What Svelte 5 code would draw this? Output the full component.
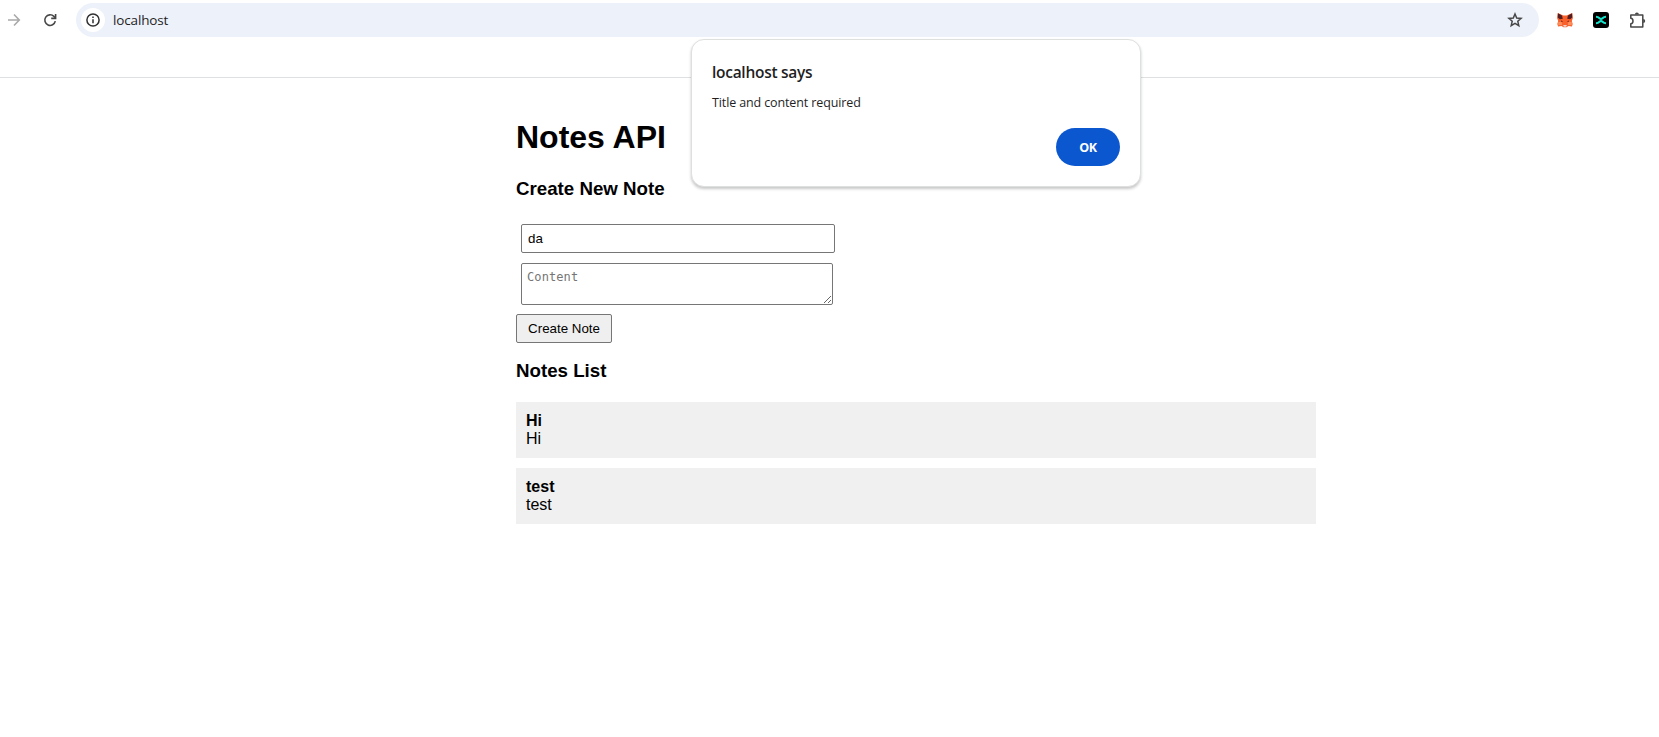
<script>
  let title = $state('da');
  let content = $state('');
  const notes = [
    { title: 'Hi', content: 'Hi' },
    { title: 'test', content: 'test' }
  ];
</script>

<div class="browser">
  <header class="toolbar">
    <svg class="forward" width="14" height="14" viewBox="0 0 14 14" fill="none" stroke="#a9a9a9" stroke-width="1.6">
      <path d="M1 7h11M7 1.5 12.3 7 7 12.5" />
    </svg>
    <svg class="reload" width="14" height="14" viewBox="0 0 14 14" fill="none" stroke="#474747" stroke-width="1.6">
      <path d="M12.3 8.2A5.3 5.3 0 1 1 10.9 3.4L12.4 5" />
      <path d="M12.6 1v4.4H8.2" />
    </svg>
    <div class="address">
      <span class="site">
        <svg width="14" height="14" viewBox="0 0 14 14" fill="none" stroke="#303030" stroke-width="1.5">
          <circle cx="7" cy="7" r="6.1" />
          <path d="M7 6.2v4M7 3.4v1.6" />
        </svg>
      </span>
      <span class="url">localhost</span>
      <svg class="star" width="16" height="16" viewBox="0 0 16 16" fill="none" stroke="#474747" stroke-width="1.5">
        <path d="m8 2 1.7 4 4.4.4-3.3 2.9 1 4.3L8 11.3l-3.8 2.3 1-4.3-3.3-2.9 4.4-.4z" />
      </svg>
    </div>
    <svg class="fox" width="16" height="16" viewBox="0 0 16 16">
      <path fill="#f9602a" d="m.8 1 5.5 2.5h3.4L15.2 1l.7 5-1.1 3 .9 3-.8 2.6-3.4-.6-2 1.2h-3l-2-1.2-3.4.6L.3 12l.9-3-1.1-3z" />
      <path fill="#541d22" d="M.9 1.2 5 3.6l.8 3.2-3 .4-2-1.6zM15.1 1.2 11 3.6l-.8 3.2 3 .4 2-1.6z" />
      <path fill="#ff8f5c" d="m1.2 10 3.4-.2.6 3.2-4 .2zM14.8 10l-3.4-.2-.6 3.2 4 .2z" />
      <path fill="#56252a" d="m4 8.2 2.2 1.9-2-.3zM12 8.2l-2.2 1.9 2-.3z" />
      <path fill="#e5d5d0" d="M6.2 13h3.6l-.5 1.8H6.7z" />
    </svg>
    <svg class="app" width="16" height="16" viewBox="0 0 16 16">
      <rect width="16" height="16" rx="3" fill="#000" />
      <path d="M3 4.8c2 0 2.5.5 3.5 1.5Q8 7.8 9.5 6.3c1-1 1.5-1.5 3.5-1.5M3 11.2c2 0 2.5-.5 3.5-1.5Q8 8.2 9.5 9.7c1 1 1.5 1.5 3.5 1.5" fill="none" stroke="#14e5cc" stroke-width="2" />
    </svg>
    <svg class="puzzle" width="17" height="17" viewBox="0 0 17 17">
      <path d="M1.8 3h12v12h-12v-3.3q2.2-.2 2.2-2.7T1.8 6.3z" fill="none" stroke="#474747" stroke-width="1.5" stroke-linejoin="round" />
      <path d="M5.9 2.5a2 2 0 0 1 4 0zM14.2 7a2 2 0 0 1 0 4z" fill="#474747" />
    </svg>
  </header>
  <div class="bookmarks"></div>

  <main>
    <h1>Notes API</h1>
    <h3>Create New Note</h3>
    <div class="form">
      <input bind:value={title} placeholder="Title" />
      <textarea bind:value={content} placeholder="Content"></textarea>
      <button class="create">Create Note</button>
    </div>
    <h3 class="list-title">Notes List</h3>
    <div class="notes">
      {#each notes as note}
        <article><b>{note.title}</b><span>{note.content}</span></article>
      {/each}
    </div>
  </main>

  <section class="dialog" role="alertdialog" aria-labelledby="says">
    <h2 id="says">localhost says</h2>
    <p>Title and content required</p>
    <button class="ok">OK</button>
  </section>
</div>

<style>
  :global(body) { margin: 0; background: #fff; }
  .browser {
    position: relative;
    height: 737px;
    overflow: hidden;
    font-family: "Liberation Sans", Arial, sans-serif;
    color: #000;
  }
  .toolbar { display: flex; align-items: center; height: 34px; padding: 3px 12px 0 7px; }
  .toolbar svg { display: block; flex: none; }
  .reload { margin-left: 22px; }
  .address {
    display: flex;
    align-items: center;
    flex: none;
    box-sizing: border-box;
    width: 1463px;
    height: 34px;
    margin-left: 19px;
    padding: 0 16px 0 5px;
    border-radius: 17px;
    background: #edf1fa;
  }
  .site { display: grid; place-items: center; width: 24px; height: 24px; border-radius: 50%; background: #fff; }
  .url { flex: 1; margin-left: 8px; font: 13.5px/20px "Open Sans", sans-serif; letter-spacing: -0.15px; color: #1f1f1f; }
  .fox { margin-left: 18px; }
  .app { margin-left: 20px; }
  .puzzle { margin-left: 20px; }
  .bookmarks { height: 40px; border-bottom: 1px solid #dfe0e1; }
  main { width: 800px; margin: 41px 0 0 516px; }
  h1 { margin: 0; font-size: 32px; line-height: 37px; }
  h3 { margin: 22px 0 0; font-size: 18.72px; line-height: 22px; }
  .form { display: flex; flex-direction: column; align-items: flex-start; margin-top: 24px; }
  input, textarea { box-sizing: border-box; border: 1px solid #767676; border-radius: 2px; background: #fff; margin: 0 0 0 5px; outline: 0; }
  input { width: 314px; height: 29px; padding: 1px 6px; font: 13.333px "Liberation Sans", Arial, sans-serif; color: #000; }
  textarea { width: 312px; height: 42px; margin-top: 10px; padding: 5px; font: 12px/17px "DejaVu Sans Mono", monospace; letter-spacing: 0.1px; }
  textarea::placeholder { color: #757575; }
  .create { width: 96px; height: 29px; margin-top: 9px; padding: 0; border: 1px solid #767676; border-radius: 2px; background: #efefef; color: #000; font: 13.333px "Liberation Sans", Arial, sans-serif; }
  .list-title { margin-top: 17px; }
  .notes { display: flex; flex-direction: column; gap: 10px; margin-top: 20px; }
  article { display: flex; flex-direction: column; box-sizing: border-box; height: 56px; padding: 10px; background: #f0f0f0; font-size: 16px; line-height: 18px; }
  .dialog {
    position: absolute;
    left: 691px;
    top: 39px;
    display: flex;
    flex-direction: column;
    box-sizing: border-box;
    width: 450px;
    height: 148px;
    padding: 20px;
    border: 1px solid #dedfdf;
    border-radius: 13px;
    background: #fff;
    box-shadow: 0 2px 3px rgba(0, 0, 0, 0.22);
    font-family: "Open Sans", sans-serif;
    color: #1f1f1f;
  }
  .dialog h2 { margin: 0; font-size: 15.5px; font-weight: 600; line-height: 24px; letter-spacing: -0.28px; }
  .dialog p { margin: 9px 0 0; font-size: 12.5px; line-height: 20px; letter-spacing: -0.12px; }
  .ok { align-self: flex-end; width: 64px; height: 38px; margin-top: 15px; padding: 0; border: 0; border-radius: 19px; background: #0b57d0; color: #fff; font: 700 12.5px "Open Sans", sans-serif; letter-spacing: -0.3px; }
</style>
